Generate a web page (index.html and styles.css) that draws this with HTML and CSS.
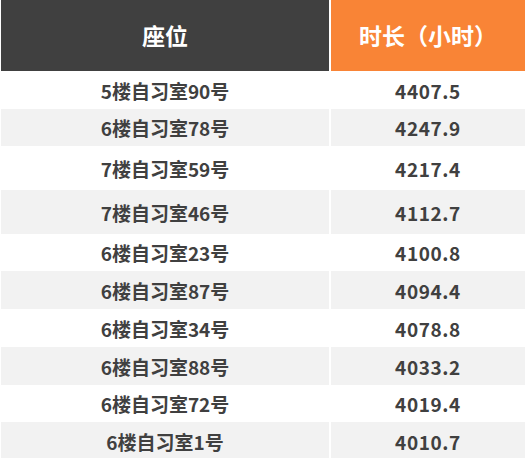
FILE: index.html
```html
<!DOCTYPE html>
<html lang="zh">
<head>
<meta charset="utf-8">
<link rel="stylesheet" href="styles.css">
</head>
<body>
<div class="table">
  <div class="row head">
    <div class="cell seat">座位</div>
    <div class="cell hours">时长（小时）</div>
  </div>
  <div class="row"><div class="cell">5楼自习室90号</div><div class="cell num">4407.5</div></div>
  <div class="row alt short"><div class="cell">6楼自习室78号</div><div class="cell num">4247.9</div></div>
  <div class="row tall"><div class="cell">7楼自习室59号</div><div class="cell num">4217.4</div></div>
  <div class="row alt tall"><div class="cell">7楼自习室46号</div><div class="cell num">4112.7</div></div>
  <div class="row short"><div class="cell">6楼自习室23号</div><div class="cell num">4100.8</div></div>
  <div class="row alt"><div class="cell">6楼自习室87号</div><div class="cell num">4094.4</div></div>
  <div class="row"><div class="cell">6楼自习室34号</div><div class="cell num">4078.8</div></div>
  <div class="row alt"><div class="cell">6楼自习室88号</div><div class="cell num">4033.2</div></div>
  <div class="row short"><div class="cell">6楼自习室72号</div><div class="cell num">4019.4</div></div>
  <div class="row alt"><div class="cell">6楼自习室1号</div><div class="cell num">4010.7</div></div>
</div>
</body>
</html>
```
FILE: styles.css
```css
html, body {
  margin: 0;
  padding: 0;
  background: #ffffff;
}
body {
  font-family: "Noto Sans CJK SC", "Noto Sans", sans-serif;
  font-weight: 700;
  color: #404040;
}
.table {
  display: flex;
  flex-direction: column;
  width: 524px;
  padding-left: 1px;
}
.row {
  display: grid;
  grid-template-columns: 328px 1fr;
  column-gap: 2px;
  height: 38px;
}
.row.short { height: 37px; }
.row.tall { height: 44px; }
.cell {
  display: flex;
  align-items: center;
  justify-content: center;
  font-size: 19px;
  line-height: 1;
}
.num {
  letter-spacing: 0.6px;
}
.row.alt .cell {
  background: #f2f2f2;
}
.row.head {
  height: 71px;
}
.head .cell {
  color: #ffffff;
  font-size: 23px;
}
.head .seat {
  background: #404040;
}
.head .hours {
  background: #f98436;
}
```
